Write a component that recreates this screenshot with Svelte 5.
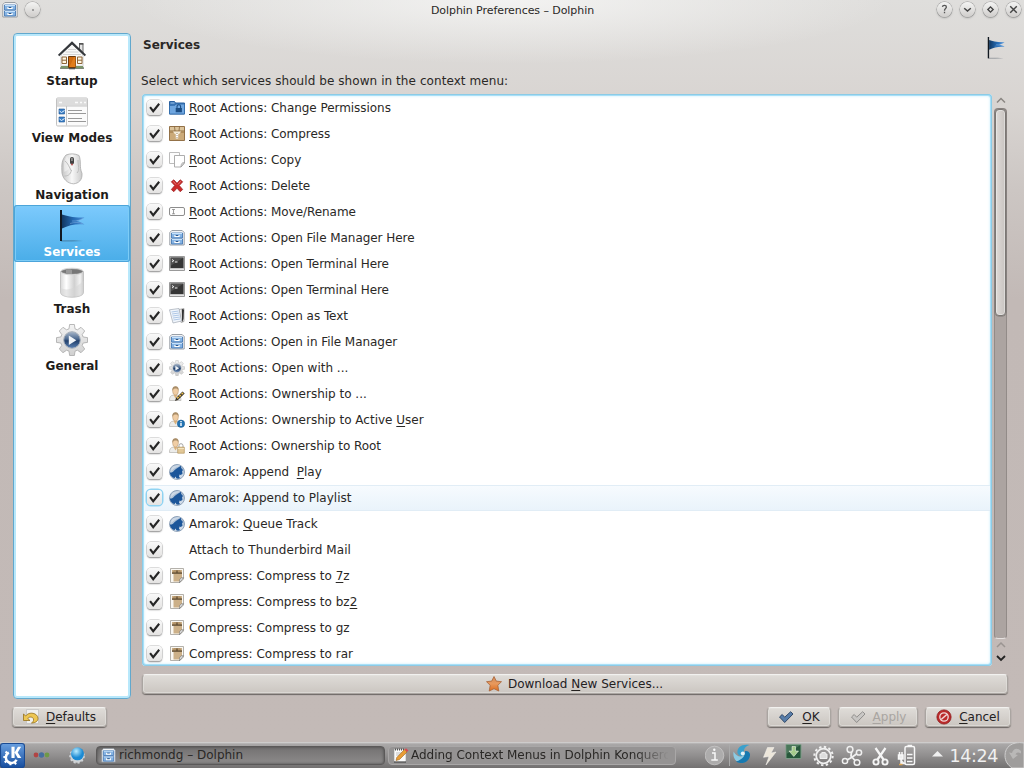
<script>
  const sections = [
    { name: 'Startup', icon: 'house' },
    { name: 'View Modes', icon: 'views' },
    { name: 'Navigation', icon: 'mouse' },
    { name: 'Services', icon: 'flag' },
    { name: 'Trash', icon: 'trash' },
    { name: 'General', icon: 'gear' },
  ];
  // An ampersand marks the accelerator letter that follows it.
  const services = [
    ['lockfolder', '&Root Actions: Change Permissions'],
    ['box', '&Root Actions: Compress'],
    ['copy', '&Root Actions: Copy'],
    ['delete', '&Root Actions: Delete'],
    ['rename', '&Root Actions: Move/Rename'],
    ['cabinet', '&Root Actions: Open File Manager Here'],
    ['terminal', '&Root Actions: Open Terminal Here'],
    ['terminal', '&Root Actions: Open Terminal Here'],
    ['text', '&Root Actions: Open as Text'],
    ['cabinet', '&Root Actions: Open in File Manager'],
    ['gear', '&Root Actions: Open with ...'],
    ['useredit', '&Root Actions: Ownership to ...'],
    ['userinfo', '&Root Actions: Ownership to Active &User'],
    ['userlock', '&Root Actions: Ownership to Root'],
    ['amarok', 'Amarok: Append  &Play'],
    ['amarok', 'Amarok: Append to Playlist'],
    ['amarok', 'Amarok: &Queue Track'],
    ['none', 'Attach to Thunderbird Mail'],
    ['ark', 'Compress: Compress to &7z'],
    ['ark', 'Compress: Compress to bz&2'],
    ['ark', 'Compress: Compress to gz'],
    ['ark', 'Compress: Compress to rar'],
  ];
  const hovered = 15;
  let selected = $state('Services');
  const split = (s) => {
    const p = s.split('&');
    return [{ t: p[0], k: false }].concat(
      ...p.slice(1).map((x) => [{ t: x[0], k: true }, { t: x.slice(1), k: false }])
    );
  };
  const gearPath =
    'M13.6 .5h4.800l.6 4.300 2.400 1L25 3.300l3.700 3.700-2.500 3.600 1 2.400 4.300.6v4.800l-4.300.6-1 2.400 2.500 3.600-3.700 3.700-3.600-2.500-2.400 1-.6 4.300h-4.800l-.6-4.300-2.400-1L7 28.700 3.300 25l2.500-3.600-1-2.400-4.300-.6v-4.800l4.300-.6 1-2.400L3.300 7 7 3.300l3.600 2.500 2.400-1z';
</script>

{#snippet label(s)}<span class="label" class:tight={s.startsWith('&Root') && !s.endsWith('...') && !s.includes('&User')} class:loose={s.startsWith('Attach')}>{#each split(s) as p}{#if p.k}<u>{p.t}</u>{:else}{p.t}{/if}{/each}</span>{/snippet}

{#snippet person()}
  <path d="M.5 14.500c-.2-3.500 1-5 4-5.500h4c2.500.5 3.500 2 3.500 5.500z" fill="#ececea" stroke="#b4b3af" stroke-width=".7" />
  <path d="M4.500 9 6.500 12.500l2-3.500z" fill="#dbb27c" />
  <ellipse cx="6.500" cy="5" rx="2.900" ry="4" fill="#f0cda4" stroke="#b59470" stroke-width=".5" />
  <path d="M3.400 5C3 1.500 4.700.3 6.700.3S10 1.800 9.600 5C9 2.500 7.500 2.600 6 2.600S4 3.500 3.400 5z" fill="#a98d68" />
{/snippet}

{#snippet icon(name, size)}
  {#if name === 'house'}
    <svg width={size} height={size} viewBox="0 0 32 32">
      <path d="M23.500 5h3.500v9l-3.500-4z" fill="#e5e5e5" stroke="#444" stroke-width=".8" /><path d="M23 4h4.500v1.500H23z" fill="#555" />
      <path d="M5 16 16 5l11 11v13H5z" fill="#f8f8f7" stroke="#b8b8b8" stroke-width=".7" />
      <path d="M12 10.500h8M9.500 13h13M7 15.500h18M6 27h20" stroke="#d4d4d4" />
      <path d="M2 15.800 16 2.200l14 13.600-1.200 1.400L16 5.500 3.200 17.200z" fill="#34373b" />
      <path d="M4 28.500h24v1.200H4z" fill="#4f5c48" /><path d="M5 27h7v2H5zM20 29h7v-2h-7z" fill="#7a9468" />
      <path d="M12.500 17.500h7v11h-7z" fill="#cf6a10" stroke="#6b3a0e" /><path d="M13.500 28 18 18h1.500v10z" fill="#e07d1c" />
      <path d="M6 18h4.500v6.500H6zM21.500 18H26v6.500h-4.500z" fill="#fff7e4" stroke="#8d6537" />
      <path d="M6 21.200h4.500M21.500 21.200H26" stroke="#8d6537" />
      <path d="M13 29h6v1.300h-6z" fill="#555" />
    </svg>
  {:else if name === 'views'}
    <svg width={size} height={size} viewBox="0 0 32 32">
      <rect x=".5" y="2" width="31" height="28" rx="1.200" fill="#fbfbfb" stroke="#c1c1c1" />
      <path d="M1 2.500h30v7H1z" fill="#dcdcdc" /><path d="M1 10h30M10.500 10v19.500" stroke="#c4c4c4" />
      <path d="M3 6.500h3M19 6.500h3M24 6.500h2M28 6.500h2" stroke="#fafafa" stroke-width="1.600" />
      <path d="M3 13h5.500v5H3zM3 21h5.500v5H3z" fill="#3b7fc6" stroke="#1b5595" stroke-width=".6" />
      <path d="m3.500 15 2 1.500 3-2M3.500 23l2 1.500 3-2" stroke="#e9f4ff" fill="none" />
      <path d="M12 14.500h14M12 17.500h18M12 22.500h14M12 25.500h18" stroke="#999" />
    </svg>
  {:else if name === 'mouse'}
    <svg width={size} height={size} viewBox="0 0 32 32">
      <path d="M10 2C14 .4 19 .4 23 2.500c2.500 6 0 11 3 18 .5 6.500-3.500 10-8.500 10.300C11.500 30.500 7 26 6 20 5.500 12 5.500 7 10 2z" fill="url(#ms)" stroke="#a9a9a9" stroke-width=".8" />
      <path d="M11 3c-4 5-3 11-2.500 16 3-2 6.500-3 6-9z" fill="#fff" opacity=".45" />
      <path d="M9 8c3 2 4 6 6.500 10M22 7c0 6 2 10-1 13M15.500 17c-1 5-4 6-7 6" stroke="#bdbdbd" fill="none" />
      <rect x="14" y="4" width="4" height="7.500" rx="2" fill="#444" /><rect x="15.300" y="5" width="1.300" height="3" fill="#aaa" /><circle cx="16" cy="11.500" r="1" fill="#b55" />
    </svg>
  {:else if name === 'flag'}
    <svg width={size} height={size} viewBox="0 0 32 32">
      <path d="M5 30.200h13l9 .8-12 .5H5z" fill="#234" opacity=".35" />
      <path d="M6 4.500c5 1.500 12 3.500 22.500 3-2.500 1.800-5 2.800-8 3.500 3 .8 5.500 1.500 8 3.500C21 13.500 13 15 6 18.500z" fill="url(#fl)" />
      <path d="M16 11c5 .3 8-1 11-2.500M14 13.500c5-1.500 9-1 12.500 0" stroke="#9cc6f0" fill="none" stroke-width=".7" opacity=".6" />
      <path d="M4 0h2v31H4z" fill="#111820" />
    </svg>
  {:else if name === 'trash'}
    <svg width={size} height={size} viewBox="0 0 32 32">
      <path d="M4.500 4.500v21c0 6.300 23 6.300 23 0v-21z" fill="url(#tr)" stroke="#b4b4b4" stroke-width=".7" />
      <path d="M4.500 21c8 4 16-1 23-7v12c-1 5-21 5.500-23 0z" fill="#d5d5d5" opacity=".55" />
      <ellipse cx="16" cy="4.500" rx="11.300" ry="3.300" fill="#9a9a9a" stroke="#d9d9d9" /><path d="M5.500 4.500c3 3 18 3 21 0-4-3-17-3-21 0z" fill="#777" /><path d="M10 6.800V3c2-1 4-1 6 0v4z" fill="#999" />
    </svg>
  {:else if name === 'gear'}
    <svg width={size} height={size} viewBox="0 0 32 32">
      <path d={gearPath} fill="url(#gr)" stroke="#a8a8a8" stroke-width=".8" stroke-linejoin="round" />
      <circle cx="16" cy="16" r="8.300" fill="url(#bl)" stroke="#a8b0ba" />
      <path d="M12.800 11.500v9.500l7.500-4.700z" fill="#f0f4f8" />
    </svg>
  {:else if name === 'lockfolder'}
    <svg width={size} height={size} viewBox="0 0 16 16">
      <path d="M.5 1.500h5l1 1.500h9v11H.5z" fill="#3a74b4" stroke="#2a609e" /><path d="M1.500 3h4" stroke="#9cc3ea" /><path d="M.5 5.500 6 5.200 7 4h8.500v10H.5z" fill="#6fa6df" stroke="#2f69aa" stroke-width=".8" />
      <path d="M8 8V6.500a1.800 1.800 0 0 1 3.600 0V8" fill="none" stroke="#1b4c82" stroke-width="1.100" /><path d="M6.700 8h6.200v4.200H6.700z" fill="#1b4c82" />
    </svg>
  {:else if name === 'box'}
    <svg width={size} height={size} viewBox="0 0 16 16">
      <path d="M.5.500h15v14H.5z" fill="#cbaa79" stroke="#937147" /><path d="M1 1h14v3.800H1z" fill="#dcc49b" /><path d="M.5 5h15M5.500.500 6 5M10.500.500 10 5" stroke="#85653c" stroke-width=".8" />
      <path d="M1 5.500h14v1.500H1z" fill="#b08d5c" /><path d="M4 5.500c1 2 2 3 4 3s3-1 4-3z" fill="#f2ead7" /><path d="M8 8v4.500" stroke="#fff" stroke-width="2.400" /><path d="M8 7v6" stroke="#887455" stroke-width=".8" stroke-dasharray="1 1" />
    </svg>
  {:else if name === 'copy'}
    <svg width={size} height={size} viewBox="0 0 16 16">
      <path d="M.5.500h10v11H.5z" fill="#fdfdfd" stroke="#bcbcbc" /><path d="M5.500 3.500h10v7.500l-3.500 4H5.500z" fill="#fff" stroke="#adadad" /><path d="M15.500 10.500c-2 0-3.500.5-3.500 4.500z" fill="#e0e0e0" stroke="#999" stroke-width=".7" />
    </svg>
  {:else if name === 'delete'}
    <svg width={size} height={size} viewBox="0 0 16 16">
      <path d="m2.300 3.800 2.500-2L8 5.200l3.200-3.400 2.500 2L10.300 7.500l3.400 4-2.500 2.200L8 10.200l-3.200 3.500-2.500-2.200 3.400-4z" fill="#cb2a2a" stroke="#98201f" stroke-width=".7" /><path d="M4.300 3.300 7 6.500M11.700 3.300 9 6.500" stroke="#e87d76" />
    </svg>
  {:else if name === 'rename'}
    <svg width={size} height={size} viewBox="0 0 16 16">
      <rect x=".5" y="3.500" width="15" height="8" rx="1.500" fill="#fdfdfd" stroke="#8d8d8d" /><path d="M3 5.500h3M3 9.800h3M4.500 5.500v4.500" stroke="#888" stroke-width=".8" />
    </svg>
  {:else if name === 'cabinet'}
    <svg width={size} height={size} viewBox="0 0 16 16">
      <path d="M.8 15V2.500l2-2h10.400l2 2V15z" fill="#f3f4f6" stroke="#8f959d" stroke-width=".9" />
      <path d="M2.500 3h11v5h-11zM2.500 9h11v5h-11z" fill="#86b4e4" stroke="#477ab5" stroke-width=".9" /><path d="M3 3.500h10M3 9.500h10" stroke="#c7e2fb" />
      <path d="M6 5v1.500h4V5M6 11v1.500h4V11" stroke="#fff" stroke-width="1.200" fill="#2d5686" />
    </svg>
  {:else if name === 'terminal'}
    <svg width={size} height={size} viewBox="0 0 16 16">
      <path d="M.5.500h15v14H.5z" fill="#c4c4c4" stroke="#999" /><path d="M1.500 1.500h13v10.500h-13z" fill="#353535" /><path d="M2 2h12L2 9.500z" fill="#4f4f4f" /><path d="m3 3.500 1.800 1.200L3 6M6 6h2.500" stroke="#fff" stroke-width=".9" fill="none" /><path d="M1 13.500h14" stroke="#eee" stroke-width=".8" />
    </svg>
  {:else if name === 'text'}
    <svg width={size} height={size} viewBox="0 0 16 16">
      <path d="m10 1.500 5-1v13l-3 1z" fill="#eee" stroke="#888" stroke-width=".6" /><path d="m.5 1.800 9.500-1.300 2.500 12.500-8.500 2z" fill="#f1f6fc" stroke="#a0a8b3" stroke-width=".7" />
      <path d="m2.500 4 7-1M3 6l7-1M3.500 8l7-1M4 10l7-1M4.500 12l6.500-1" stroke="#92b3dd" stroke-width=".7" /><path d="m12.800 1 2.200.5-.5 9.500-1.500 3.500z" fill="#333" />
    </svg>
  {:else if name === 'useredit'}
    <svg width={size} height={size} viewBox="0 0 16 16">{@render person()}<path d="m6 15 1-3 6.500-6.500 2.200 2L9 14z" fill="#3b352c" /><path d="m8.200 12.400 6-5.700" stroke="#e9bd4c" stroke-width="1.500" stroke-dasharray="2 1" /></svg>
  {:else if name === 'userinfo'}
    <svg width={size} height={size} viewBox="0 0 16 16">{@render person()}<circle cx="12" cy="11.700" r="3.700" fill="#2274b4" stroke="#135084" stroke-width=".5" /><path d="M12 11v3M12 9v1.200" stroke="#fff" stroke-width="1.400" /></svg>
  {:else if name === 'userlock'}
    <svg width={size} height={size} viewBox="0 0 16 16">{@render person()}<path d="M10 9.500V7.700a2 2 0 0 1 4 0v1.800" fill="none" stroke="#a5a5a5" /><path d="M8.700 9.200h6.600v6H8.700z" fill="#e2c897" stroke="#b3935d" stroke-width=".7" /><path d="M9 10.500h6" stroke="#f4e3be" /></svg>
  {:else if name === 'amarok'}
    <svg width={size} height={size} viewBox="0 0 16 16">
      <circle cx="8" cy="8" r="7.500" fill="url(#am)" stroke="#7f94ad" stroke-width=".8" />
      <path d="M.8 8.500c3.500.3 4.200-2.300 6.200-3.500 1.500-.9 3-2.300 5-3.300v2l2 2.300-1 1.200.5 2.500-1.700 1.300-1.300-.5-.5 2.500 1.500 1c-1.500.8-2.500.8-4 .6l-1-2-1 1.700C2.500 13 1 11 .8 8.500z" fill="#1c569a" />
      <path d="M2.500 4C5 .5 10 .5 12 2 8 2.500 5 4.500 2 7z" fill="#fff" opacity=".45" />
    </svg>
  {:else if name === 'ark'}
    <svg width={size} height={size} viewBox="0 0 16 16">
      <path d="M1.500.500h13v10.500L11 14.500H1.500z" fill="#faf8f3" stroke="#a19e97" stroke-width=".8" />
      <path d="M3 2h10v8l-3 3.500H4.500V5.500H3z" fill="#ccb088" /><path d="m3 5 2-3h6l2 3z" fill="#b3946a" /><path d="M3 5.200h10M8 2.500v3" stroke="#5b482f" stroke-width="1.200" /><path d="M14.500 9.700c-3 0-4 1-4 5z" fill="#fff" stroke="#777" stroke-width=".8" />
    </svg>
  {:else if name === 'star'}
    <svg width={size} height={size} viewBox="0 0 16 16"><path d="m8 .5 2.300 4.600 5.200.6-3.700 3.600 1 5.700L8 12.700 3.200 15l1-5.700L.5 5.700l5.200-.6z" fill="url(#or)" stroke="#a8653a" stroke-width=".8" stroke-linejoin="round" /></svg>
  {:else if name === 'undo'}
    <svg width={size} height={size} viewBox="0 0 16 16"><path d="M3.500.500h12v14h-12z" fill="#efefef" stroke="#bdbdbd" stroke-width=".7" /><path d="M.5 5v6.500h6.500L4.800 9.500C6 7.300 10 7.700 10.500 10c.4 2-.5 3-2 4 4 0 6.500-2 6.500-4.500C15 4 6 2 2.700 7z" fill="#edc653" stroke="#94701b" stroke-width=".8" /></svg>
  {:else if name === 'tick'}
    <svg width={size} height={size} viewBox="0 0 16 16"><path d="m1.500 8 2.700-2.500 2.500 2.700 6-5.500 2.300 2.300L6.700 13.500z" fill="currentColor" stroke="#27405f" stroke-width=".9" stroke-linejoin="round" /></svg>
  {:else if name === 'stop'}
    <svg width={size} height={size} viewBox="0 0 16 16"><circle cx="8" cy="8" r="7.100" fill="#bb2a2b" stroke="#8d1a1c" stroke-width=".8" /><circle cx="8" cy="8" r="4.200" fill="none" stroke="#f0dada" stroke-width="1.300" /><path d="m5.200 10.500 5.600-5" stroke="#f0dada" stroke-width="1.500" /></svg>
  {:else if name === 'note'}
    <svg width={size} height={size} viewBox="0 0 16 16"><path d="M1 2h12v13.500H1z" fill="#fafafa" stroke="#999" stroke-width=".6" /><path d="M1 15h12" stroke="#222" /><path d="M2 2.500h10" stroke="#555" stroke-width="2" stroke-dasharray="1 1" /><path d="M3 6h6M3 8h4" stroke="#aaa" stroke-width=".7" /><path d="m3 13.500.8-3 7.700-8L14 5l-7.500 7.500z" fill="#e99d36" stroke="#9c6720" stroke-width=".6" /><path d="m11.500 2.500 1.500-1.300 2.500 2.300L14 5z" fill="#d44a55" /></svg>
  {:else}
    <svg width={size} height={size} viewBox="0 0 16 16"></svg>
  {/if}
{/snippet}

<svg class="defs" width="0" height="0">
  <defs>
    <linearGradient id="ms"><stop offset="0" stop-color="#c4c4c4" /><stop offset=".5" stop-color="#f8f8f8" /><stop offset="1" stop-color="#cbcbcb" /></linearGradient>
    <linearGradient id="fl"><stop offset="0" stop-color="#123861" /><stop offset=".5" stop-color="#2469b2" /><stop offset="1" stop-color="#4a90d9" /></linearGradient>
    <linearGradient id="tr"><stop offset="0" stop-color="#d8d8d8" /><stop offset=".25" stop-color="#fff" /><stop offset=".6" stop-color="#d0d0d0" /><stop offset=".85" stop-color="#f3f3f3" /><stop offset="1" stop-color="#c4c4c4" /></linearGradient>
    <linearGradient id="gr" x2="0" y2="1"><stop offset="0" stop-color="#f3f3f3" /><stop offset="1" stop-color="#d0d0d0" /></linearGradient>
    <linearGradient id="bl" x2="0" y2="1"><stop offset="0" stop-color="#a9b8cb" /><stop offset=".45" stop-color="#4a678e" /><stop offset=".55" stop-color="#22406b" /><stop offset="1" stop-color="#5b82b5" /></linearGradient>
    <linearGradient id="am" x2="0" y2="1"><stop offset="0" stop-color="#93adc9" /><stop offset="1" stop-color="#e3e9f0" /></linearGradient>
    <linearGradient id="or" x2="0" y2="1"><stop offset="0" stop-color="#cf8a58" /><stop offset=".5" stop-color="#e8995d" /><stop offset="1" stop-color="#dc6c1e" /></linearGradient>
    <linearGradient id="kd" x2="0" y2="1"><stop offset="0" stop-color="#699fdf" /><stop offset="1" stop-color="#174e9f" /></linearGradient>
    <radialGradient id="gl" cx=".4" cy=".3"><stop offset="0" stop-color="#b9ecff" /><stop offset="1" stop-color="#1b8ad3" /></radialGradient>
  </defs>
</svg>

<div class="screen">
  <div class="window">
    <header>
      <span class="appicon">{@render icon('cabinet', 16)}</span>
      <span class="round"><svg width="16" height="16"><circle cx="8" cy="8" r="1" fill="#888" /></svg></span>
      <h1>Dolphin Preferences – Dolphin</h1>
      <div class="wbtns">
        <span class="round"><svg width="15" height="15" viewBox="0 0 16 16" fill="none" stroke="#555" stroke-width="1.400"><path d="M5.800 5.200C6 3 10 3 10 5.300 10 7 8 7 8 9.200M8 10.500V12" /></svg></span>
        <span class="round"><svg width="15" height="15" viewBox="0 0 16 16" fill="none" stroke="#444" stroke-width="1.600"><path d="m4.500 6.700 3.500 3 3.500-3" /></svg></span>
        <span class="round"><svg width="15" height="15" viewBox="0 0 16 16" fill="none" stroke="#444" stroke-width="1.500"><path d="M8 5.200 10.800 8 8 10.800 5.200 8z" /></svg></span>
        <span class="round"><svg width="15" height="15" viewBox="0 0 16 16" fill="none" stroke="#444" stroke-width="1.500"><path d="m4.500 4.500 7 7M11.500 4.500l-7 7" /></svg></span>
      </div>
    </header>

    <main>
      <nav>
        {#each sections as s}
          <button class="section" class:active={selected === s.name} onclick={() => (selected = s.name)}>
            {@render icon(s.icon, 32)}
            <b>{s.name}</b>
          </button>
        {/each}
      </nav>
      <section class="page">
        <div class="head"><h2>Services</h2>{@render icon('flag', 22)}</div>
        <p>Select which services should be shown in the context menu:</p>
        <div class="body">
          <div class="list">
            {#each services as [ic, text], i}
              <div class="row" class:hover={i === hovered}>
                <span class="check"><svg width="15" height="15" viewBox="0 0 16 16"><path d="m3.300 7.700 3.300 4.300L13 4" fill="none" stroke="#262626" stroke-width="2.200" /></svg></span>
                {@render icon(ic, 16)}
                {@render label(text)}
              </div>
            {/each}
          </div>
          <div class="scroll">
            <svg width="12" height="12"><path d="m2 8.500 4-4 4 4" fill="none" stroke="#8b8683" stroke-width="1.500" /></svg>
            <div class="track"><div class="thumb"></div></div>
            <svg width="12" height="12"><path d="m2 8 4-4 4 4" fill="none" stroke="#9b9592" stroke-width="1.500" /></svg>
            <svg width="12" height="14"><path d="m2 5 4 4 4-4" fill="none" stroke="#222" stroke-width="1.800" /></svg>
          </div>
        </div>
        <button class="btn wide">{@render icon('star', 16)}{@render label('Download &New Services...')}</button>
      </section>
    </main>

    <footer>
      <button class="btn defaults">{@render icon('undo', 16)}{@render label('&Defaults')}</button>
      <span class="spring"></span>
      <button class="btn ok">{@render icon('tick', 16)}{@render label('&OK')}</button>
      <button class="btn apply" disabled>{@render icon('tick', 16)}{@render label('&Apply')}</button>
      <button class="btn cancel">{@render icon('stop', 16)}{@render label('&Cancel')}</button>
    </footer>
  </div>

  <div class="panel">
    <svg class="kmenu" width="25" height="25" viewBox="0 0 24 24">
      <rect x=".5" y=".5" width="23" height="23" rx="2.500" fill="url(#kd)" stroke="#1b4b93" />
      <path d="M8.500 9.200A5.300 5.300 0 1 0 15.800 16" fill="none" stroke="#fff" stroke-width="2.400" />
      <path d="M7.500 10 5.300 8.300M5.500 13.500H3.200M6.500 17l-2 1.600M10 19v2.400M14 18.500l1.400 2" fill="none" stroke="#fff" stroke-width="2" />
      <path d="M11 3.500h3v11h-3zM14 9l3.200-5.500h3.100L17 9l3.500 5.500H17z" fill="#fff" />
    </svg>
    <svg class="dots" width="17" height="6" viewBox="0 0 17 6"><circle cx="3" cy="3" r="2.400" fill="#b14444" /><circle cx="8.500" cy="3" r="2.700" fill="#466f9f" /><circle cx="14" cy="3" r="2.400" fill="#6f9a46" /></svg>
    <svg class="globe" width="18" height="18" viewBox="0 0 18 18"><circle cx="9" cy="10" r="6.800" fill="#cfd3d6" stroke="#cfd3d6" stroke-width="2" stroke-dasharray="2 2" /><circle cx="9.500" cy="7.800" r="6.500" fill="url(#gl)" /></svg>
    <div class="task current">{@render icon('cabinet', 15)}<span>richmondg – Dolphin</span></div>
    <div class="task other">{@render icon('note', 16)}<span class="fade">Adding Context Menus in Dolphin Konquero</span></div>
    <div class="tray">
      <svg width="319" height="26" viewBox="0 0 319 26" fill="none">
        <circle cx="9.500" cy="13.500" r="9.300" fill="#adacac" stroke="#c9c8c8" stroke-width=".8" />
        <path d="M7 11h3v6.500M6.300 18h6.500" stroke="#f8f8f8" stroke-width="1.500" /><circle cx="9.300" cy="7.800" r="1.200" fill="#f8f8f8" />
        <path d="M24.500 2v22" stroke="#aaa" />
        <path d="M44.500 3c-7-1.500-13 2-12 8 1 3 5 4 7.500 1.500C38 9 38.500 5 44.500 3z" fill="#3aa0cc" />
        <path d="M28.500 9.500c-1 7 3 12 9 11 3-.5 3.500-5 1-7-3 2-7 1-10-4z" fill="#8ccbe4" />
        <path d="M31 19.500c6 3.500 13 1 14-6 .4-3-2-5-5-4.500.5 3.500-1 8-9 10.500z" fill="#1679b0" />
        <circle cx="37.800" cy="11.500" r="2" fill="#e2f2f8" />
        <path d="M62.500 5.500h6.500l-3 5.500 5-1-10 13 3-8.500-5.500.8z" fill="#ece6da" stroke="#f9f7f2" stroke-width=".5" />
        <path d="M81 2.500h15v14H81z" fill="#27583b" stroke="#7c9c87" stroke-width="1" /><path d="M81.500 3h14L81.500 12z" fill="#6d9579" opacity=".5" /><path d="M87 4.500h3.500v4.500h3l-4.700 5.500L84 9h3z" fill="#a5cc8c" stroke="#fff" stroke-width=".5" />
        <g stroke="#f0f0f0"><circle cx="118.500" cy="14" r="7.300" stroke-width="1.800" /><circle cx="118.500" cy="14" r="9.200" stroke-width="2" stroke-dasharray="2.400 2.420" /><path d="M115 12v4.500h7v-4.500h-1.700v-1.500h-3.500v1.500z" fill="#ddd" stroke-width="1" /></g>
        <g stroke="#f0f0f0" stroke-width="1.500"><circle cx="145" cy="7.500" r="2.900" /><circle cx="154" cy="10.500" r="2.600" /><circle cx="140" cy="19" r="2.600" /><circle cx="152" cy="20.500" r="2.800" /><path d="m146.500 10-.5 4 4 4.500M151.500 12l-5 3.500-4.500 2.500" stroke-width="1.800" /></g>
        <g stroke="#f5f5f5" stroke-width="1.900"><circle cx="171" cy="20" r="2.600" /><circle cx="180" cy="20" r="2.600" /><path d="M170.500 6 178.500 17.500M180.500 6 172.500 17.500" stroke-width="2.200" /></g>
        <g stroke="#f8f8f8" stroke-width="1.500"><rect x="200" y="4.500" width="9.500" height="18" rx="1.500" /><path d="M202.500 3.500h4.500M202 12.500h5.500M202 16h5.500M202 19.500h5.500" /><path d="M193.500 13v4h4.500v-4zM194.500 10v3M197 10v3M196 17v4.500h4" fill="#eee" /><path d="M194 22.500h3.500" stroke="#dca451" /></g>
        <path d="m227 14.500 5.500-5.500 5.500 5.500z" fill="#f0f0f0" />
        <text x="244.500" y="20" font-size="17.500" textLength="49" fill="#f0f0f0">14:24</text>
        <path d="M319 1c-12-2-19 4-19 12.500 0 6 3 9.500 7 12.500h12z" fill="#9f9d9c" stroke="#d0cfcf" stroke-width="1" /><path d="M316 9c-4-4-8-2-9 2l-3-.5 4 6.500 5-4-2.500-.5c1-2.500 3-2.500 5.500-1z" fill="#c4c3c3" opacity=".7" />
      </svg>
    </div>
  </div>
</div>

<style>
  :global(body) { margin: 0; overflow: hidden; }
  .screen { width: 1024px; height: 768px; display: flex; flex-direction: column; font: 12px/16px "DejaVu Sans", sans-serif; color: #2a2826; }
  .defs { position: absolute; }
  svg { display: block; flex: none; }
  .window { height: 742px; box-sizing: border-box; display: flex; flex-direction: column; background: radial-gradient(ellipse 380px 64px at 512px 0, #f8f8f7c8, #f8f8f700), linear-gradient(#dfdedc 0, #d8d4d1 110px, #ccc6c3 190px, #c2b9b6 300px, #c3bab7 100%); }
  header { height: 33px; display: flex; align-items: flex-start; padding: 1px 3px 0 2px; box-sizing: border-box; }
  .appicon { margin-top: 1px; }
  .round { width: 15px; height: 15px; margin-top: 1px; border-radius: 50%; background: linear-gradient(#f4f4f3, #cfcdcb); box-shadow: 0 0 0 .5px #999, 0 1px 2px #6668; display: grid; place-items: center; }
  .appicon + .round { margin-left: 7px; }
  h1 { flex: 1; margin: 1px 0 0 -5px; padding-left: 53px; text-align: center; font-size: 11px; font-weight: normal; line-height: 17px; letter-spacing: -.07px; }
  .wbtns { display: flex; gap: 8px; }
  main { height: 666px; display: flex; padding: 0 16px 0 13px; }
  nav { width: 118px; box-sizing: border-box; border: 1px solid #62a8cd; border-radius: 4px; background: #fff; box-shadow: inset 0 0 0 2px #b8e8fb; }
  .section { width: 116px; height: 57px; padding: 5px 0 0; border: 0; background: none; display: flex; flex-direction: column; align-items: center; font: inherit; color: #1e1c1a; }
  .section b { margin-top: 2px; line-height: 16px; font-size: 12px; }
  .section.active { color: #fff; background: linear-gradient(#7dcafd, #49ade8); box-shadow: inset 0 0 0 1px #4ca4da, inset 0 0 0 2px #7dccf6; border-radius: 3px; }
  .page { flex: 1; margin-left: 11px; display: flex; flex-direction: column; }
  .head { height: 39px; display: flex; justify-content: space-between; padding: 4px 0 0 1px; box-sizing: border-box; }
  .head :global(svg) { margin-right: 1px; }
  h2 { margin: 0; font-size: 12px; line-height: 16px; }
  p { margin: 0 0 0 -1px; height: 22px; line-height: 19px; letter-spacing: .07px; }
  .body { height: 572px; display: flex; }
  .list { width: 850px; height: 572px; box-sizing: border-box; padding: 1px 2px 0 3px; border-radius: 4px; border: 0; background: #fff; box-shadow: inset 0 0 0 1px #8ccbe6, inset 0 0 0 2px #a8e0f8, inset 0 0 3px 2px #c9effd; overflow: hidden; }
  .row { height: 26px; box-sizing: border-box; padding: 0 0 1px 2px; display: flex; align-items: center; }
  .row .label { margin-left: 4px; }
  .tight { letter-spacing: -.05px; }
  .loose { letter-spacing: .07px; }
  .row.hover { background: linear-gradient(#f7fbfe, #e9f3fb); box-shadow: inset 0 1px #e1edf6, inset 0 -1px #e1edf6; }
  .check { width: 15px; height: 15px; border-radius: 4px; margin-right: 7px; background: linear-gradient(#f9f9f9, #e4e3e2); box-shadow: 0 0 0 .5px #bbb, 0 1px 1.500px #777; }
  .hover .check { box-shadow: 0 0 0 1.500px #8fd3f2; }
  .label { white-space: pre; }
  u { text-decoration: underline; text-decoration-thickness: 1px; text-underline-offset: 2px; }
  .scroll { width: 13px; margin-left: 2px; display: flex; flex-direction: column; align-items: center; }
  .track { width: 11px; height: 529px; border-radius: 4px; background: #aca4a1; border: 1px solid #928b88; border-bottom-color: #e6e2e0; margin-top: 2px; }
  .thumb { width: 9px; height: 205px; border: 1px solid #7b7774; border-radius: 4px; background: linear-gradient(90deg, #dedad7, #c9c4c1); box-shadow: inset 0 0 0 1px #eee8, 0 0 0 .5px #7b7774; }
  .btn { box-sizing: border-box; height: 20px; padding: 0; border: 1px solid #aaa5a1; border-top-color: #f2f1ef; border-radius: 4px; background: linear-gradient(#dfdcd8, #cbc6c1); box-shadow: inset 0 0 0 1px #e5e2df99, 0 1px 1px #6c6764; display: flex; align-items: center; justify-content: center; gap: 7px; font: inherit; color: #24211f; }
  .wide { margin-top: 8px; width: 866px; gap: 6px; padding-right: 1px; letter-spacing: -.02px; }
  footer { height: 43px; box-sizing: border-box; display: flex; padding: 8px 13px 0 13px; }
  .spring { flex: 1; }
  .defaults { width: 95px; margin-left: -1px; }
  .ok { width: 64px; margin-right: 7px; gap: 8px; }
  .ok :global(svg) { color: #587da9; }
  .apply { width: 80px; margin-right: 7px; color: #a9a5a1; }
  .apply :global(svg) { color: #c0bebb; filter: grayscale(1); opacity: .5; }
  .cancel { width: 86px; }
  .panel { height: 26px; box-sizing: border-box; display: flex; align-items: center; background: linear-gradient(#d9d8d7 0, #aaa8a8 2px, #8f8d8d 55%, #737171); }
  .dots { margin-left: 8px; }
  .globe { margin-left: 18px; }
  .task { height: 19px; box-sizing: border-box; display: flex; align-items: center; border-radius: 4px; padding: 0 4px; gap: 3px; white-space: nowrap; }
  .current { width: 289px; margin-left: 10px; background: linear-gradient(#737171, #8d8b8b); border: 1px solid #5b5959; box-shadow: inset 0 0 3px #444; }
  .other { width: 288px; margin-left: 3px; padding-left: 4px; gap: 2px; border: 1px solid #a9a7a7; background: #959393; }
  .fade { letter-spacing: -.03px; -webkit-mask: linear-gradient(90deg, #000 86%, transparent 99%); mask: linear-gradient(90deg, #000 86%, transparent 99%); }
  .tray { margin-left: 29px; }
</style>
